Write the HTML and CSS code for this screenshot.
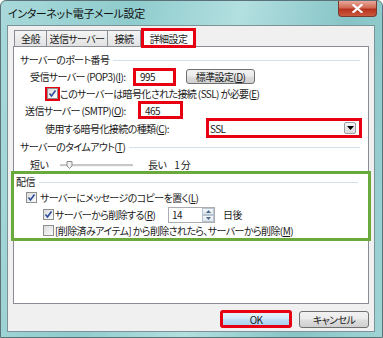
FILE: index.html
```html
<!DOCTYPE html>
<html lang="ja">

<head>
    <meta charset="UTF-8">
    <title>インターネット電子メール設定</title>
    <link rel="stylesheet" href="styles.css">
</head>

<body>

    <div class="window">
        <div class="titlebar">
            <span class="title">インターネット電子メール設定</span>
            <div class="close">
                <svg width="11" height="9" viewBox="0 0 11 9">
                    <path d="M1.5 1 L9.5 8 M9.5 1 L1.5 8" stroke="#fff" stroke-width="2.2" stroke-linecap="square" />
                </svg>
            </div>
        </div>

        <div class="client">
            <div class="tabs">
                <div class="tab">全般</div>
                <div class="tab">送信サーバー</div>
                <div class="tab">接続</div>
                <div class="tab active">詳細設定</div>
            </div>

            <div class="panel">
                <!-- Port numbers -->
                <div class="group-head first">
                    <span>サーバーのポート番号</span>
                    <span class="rule"></span>
                </div>
                <div class="row pop">
                    <span class="label">受信サーバー (POP3)(<u>I</u>):</span>
                    <span class="field hl">995</span>
                    <span class="btn std">標準設定(<u>D</u>)</span>
                </div>
                <div class="row ssl">
                    <span class="hl-box"><span class="cb checked"></span></span>
                    <span>このサーバーは暗号化された接続 (SSL) が必要(<u>E</u>)</span>
                </div>
                <div class="row smtp">
                    <span class="label">送信サーバー (SMTP)(<u>O</u>):</span>
                    <span class="field hl">465</span>
                </div>
                <div class="row enc">
                    <span class="label">使用する暗号化接続の種類(<u>C</u>):</span>
                    <span class="select hl">
                        <span>SSL</span>
                        <span class="drop">
                            <svg width="7" height="4" viewBox="0 0 7 4"><path d="M0 0 H7 L3.5 4 Z" fill="#000" /></svg>
                        </span>
                    </span>
                </div>

                <!-- Timeout -->
                <div class="group-head timeout">
                    <span>サーバーのタイムアウト(<u>T</u>)</span>
                    <span class="rule"></span>
                </div>
                <div class="row slider-row">
                    <span class="short">短い</span>
                    <svg class="slider" width="73" height="10" viewBox="0 0 73 10">
                        <rect x="0" y="4" width="73" height="2" fill="#c8c8c8" />
                        <rect x="0" y="6" width="73" height="1" fill="#f4f4f4" />
                        <path d="M7 1.5 H12 V6 L9.5 8.5 L7 6 Z" fill="#f2f2f2" stroke="#8a8a8a" stroke-width="1" />
                    </svg>
                    <span class="long">長い</span>
                    <span class="minute">1 分</span>
                </div>

                <!-- Delivery -->
                <div class="delivery">
                    <div class="group-head">
                        <span>配信</span>
                        <span class="rule"></span>
                    </div>
                    <div class="row keep">
                        <span class="cb checked"></span>
                        <span class="cb-text">サーバーにメッセージのコピーを置く(<u>L</u>)</span>
                    </div>
                    <div class="row remove">
                        <span class="cb checked"></span>
                        <span class="cb-text remove-text">サーバーから削除する(<u>R</u>)</span>
                        <span class="spin">
                            <span>14</span>
                            <span class="spin-btns">
                                <span class="spin-btn"><svg width="5" height="3" viewBox="0 0 5 3"><path d="M0 3 L2.5 0 L5 3 Z" fill="#4a6a8a" /></svg></span>
                                <span class="spin-btn"><svg width="5" height="3" viewBox="0 0 5 3"><path d="M0 0 H5 L2.5 3 Z" fill="#4a6a8a" /></svg></span>
                            </span>
                        </span>
                        <span class="days">日後</span>
                    </div>
                    <div class="row remove last">
                        <span class="cb"></span>
                        <span class="cb-text">[削除済みアイテム] から削除されたら、サーバーから削除(<u>M</u>)</span>
                    </div>
                </div>
            </div>

            <div class="buttons">
                <span class="btn ok">OK</span>
                <span class="btn cancel">キャンセル</span>
            </div>
        </div>
    </div>

</body>

</html>
```

FILE: styles.css
```css
body {
    margin: 0;
    width: 383px;
    height: 338px;
    overflow: hidden;
    font-family: "Noto Sans CJK JP", "Noto Sans", sans-serif;
    font-size: 10px;
    letter-spacing: -0.6px;
    white-space: nowrap;
    font-feature-settings: "palt";
    color: #1a1a1a;
    background: #ffffff;
}

u {
    text-decoration: underline;
    text-underline-offset: 1px;
}

/* Aero window frame */
.window {
    height: 338px;
    box-sizing: border-box;
    border: 1px solid #5b7378;
    border-radius: 6px 6px 0 0;
    background: linear-gradient(100deg, #a9d9da 0%, #8fcccd 30%, #b3dfe0 55%, #86c4c6 80%, #a0d4d5 100%);
    padding: 0 7px 5px 6px;
    display: flex;
    flex-direction: column;
}

.titlebar {
    height: 24px;
    display: flex;
    justify-content: space-between;
    align-items: flex-start;
}

.title {
    margin-top: 4px;
    margin-left: 1px;
    font-size: 11px;
    letter-spacing: -0.4px;
    color: #111;
}

.close {
    width: 39px;
    height: 16px;
    margin-right: -2px;
    box-sizing: border-box;
    border: 1px solid #7a3a30;
    border-top: none;
    border-radius: 0 0 4px 4px;
    background: linear-gradient(#e9a89a, #d06a55 45%, #b8321e 55%, #c95a3e);
    display: flex;
    align-items: center;
    justify-content: center;
}

.client {
    flex: 1;
    background: #f0f0f0;
    border: 1px solid #7d9296;
    display: flex;
    flex-direction: column;
    padding: 0 5px 0 5px;
}

/* Tabs */
.tabs {
    display: flex;
    align-items: flex-end;
    height: 20px;
    margin-top: 2px;
    margin-bottom: -2px;
    padding-left: 1px;
    position: relative;
    z-index: 1;
}

.tab {
    height: 16px;
    box-sizing: border-box;
    border: 1px solid #898c95;
    border-bottom: none;
    background: linear-gradient(#f4f4f4, #e2e2e2);
    display: flex;
    align-items: center;
    justify-content: center;
    margin-bottom: 2px;
    margin-right: -1px;
}

.tab:nth-child(1) {
    width: 33px;
}

.tab:nth-child(2) {
    width: 62px;
}

.tab:nth-child(3) {
    width: 34px;
}

.tab.active {
    width: 55px;
    height: 20px;
    margin-left: 1px;
    margin-bottom: 0;
    border: 3px solid #e60012;
    background: #ffffff;
}

/* Tab panel */
.panel {
    background: #ffffff;
    border: 1px solid #898c95;
    height: 258px;
    box-sizing: border-box;
}

.group-head {
    display: flex;
    align-items: center;
    height: 17px;
    padding-left: 6px;
    padding-right: 8px;
}

.group-head.first {
    margin-top: 4px;
}

.group-head.timeout {
    margin-top: 1px;
}

.rule {
    flex: 1;
    height: 1px;
    background: #d5dfe5;
    margin-left: 4px;
    margin-top: 1px;
}

.row {
    display: flex;
    align-items: center;
    height: 17px;
}

.label {
    flex-shrink: 0;
}

.hl {
    border: 3px solid #e60012;
    box-sizing: border-box;
    background: #ffffff;
}

.field {
    display: flex;
    align-items: center;
    height: 18px;
    padding-left: 4px;
}

.pop {
    padding-left: 16px;
}

.pop .label {
    width: 103px;
}

.pop .field {
    width: 43px;
}

.btn {
    display: flex;
    align-items: center;
    justify-content: center;
    box-sizing: border-box;
    border: 1px solid #707070;
    border-radius: 3px;
    background: linear-gradient(#f2f2f2 0%, #ebebeb 45%, #dddddd 55%, #cfcfcf 100%);
}

.std {
    width: 69px;
    height: 15px;
    margin-left: 10px;
}

.ssl {
    padding-left: 31px;
}

.hl-box {
    width: 15px;
    height: 14px;
    box-sizing: border-box;
    border: 2px solid #e60012;
    display: flex;
    align-items: center;
    justify-content: center;
}

.cb {
    width: 11px;
    height: 11px;
    flex-shrink: 0;
    box-sizing: border-box;
    border: 1px solid #8e8f8f;
    background: linear-gradient(135deg, #dcdcdc, #fbfbfb);
}

.cb.checked {
    background-image: url("data:image/svg+xml;utf8,<svg xmlns='http://www.w3.org/2000/svg' width='9' height='9' viewBox='0 0 9 9'><path d='M1.5 4.5 L3.5 7 L7.5 1.5' fill='none' stroke='%232a4a9a' stroke-width='1.6'/></svg>"), linear-gradient(135deg, #dcdcdc, #fbfbfb);
    background-repeat: no-repeat;
    background-position: center;
}

.smtp {
    padding-left: 11px;
}

.smtp .label {
    width: 113px;
}

.smtp .field {
    width: 45px;
    margin-top: -1px;
}

.enc {
    padding-left: 31px;
    height: 18px;
}

.enc .label {
    width: 161px;
}

.select {
    width: 156px;
    height: 20px;
    display: flex;
    align-items: center;
    justify-content: space-between;
    padding: 0 3px 0 1px;
}

.drop {
    width: 12px;
    height: 12px;
    box-sizing: border-box;
    border: 1px solid #a0a0a0;
    border-radius: 2px;
    background: linear-gradient(#f6f6f6, #dcdcdc);
    display: flex;
    align-items: center;
    justify-content: center;
}

.slider-row {
    padding-left: 16px;
    margin-top: 1px;
}

.short {
    width: 30px;
}

.long {
    margin-left: 15px;
}

.minute {
    margin-left: 8px;
}

/* Delivery section (green highlight) */
.delivery {
    margin: -2px -3px 0 -3px;
    border: 3px solid #6aaa3c;
}

.delivery .group-head {
    padding-left: 2px;
    height: 15px;
    padding-right: 10px;
}

.keep {
    padding-left: 12px;
}

.keep .cb-text {
    margin-left: 3px;
}

.remove {
    padding-left: 29px;
}

.remove.last {
    height: 15px;
}

.remove .cb-text {
    margin-left: 1px;
}

.remove-text {
    width: 113px;
}

.spin {
    width: 47px;
    height: 16px;
    box-sizing: border-box;
    border: 1px solid #abadb3;
    display: flex;
    align-items: center;
    justify-content: space-between;
    padding-left: 3px;
}

.spin-btns {
    display: flex;
    flex-direction: column;
    width: 12px;
    height: 14px;
}

.spin-btn {
    flex: 1;
    display: flex;
    align-items: center;
    justify-content: center;
    border: 1px solid #b8c4d0;
    background: linear-gradient(#f6f8fa, #dde4ec);
    box-sizing: border-box;
}

.days {
    margin-left: 8px;
}

/* Dialog buttons */
.buttons {
    display: flex;
    justify-content: flex-end;
    gap: 7px;
    margin-top: 6px;
    padding-right: 0;
}

.ok {
    width: 72px;
    height: 18px;
    border: 3px solid #e60012;
    border-radius: 3px;
    background: linear-gradient(#e6f3fb 0%, #d4ebf9 45%, #bddff5 55%, #a9d4f0 100%);
}

.cancel {
    width: 70px;
    height: 17px;
    margin-top: 1px;
}
```
